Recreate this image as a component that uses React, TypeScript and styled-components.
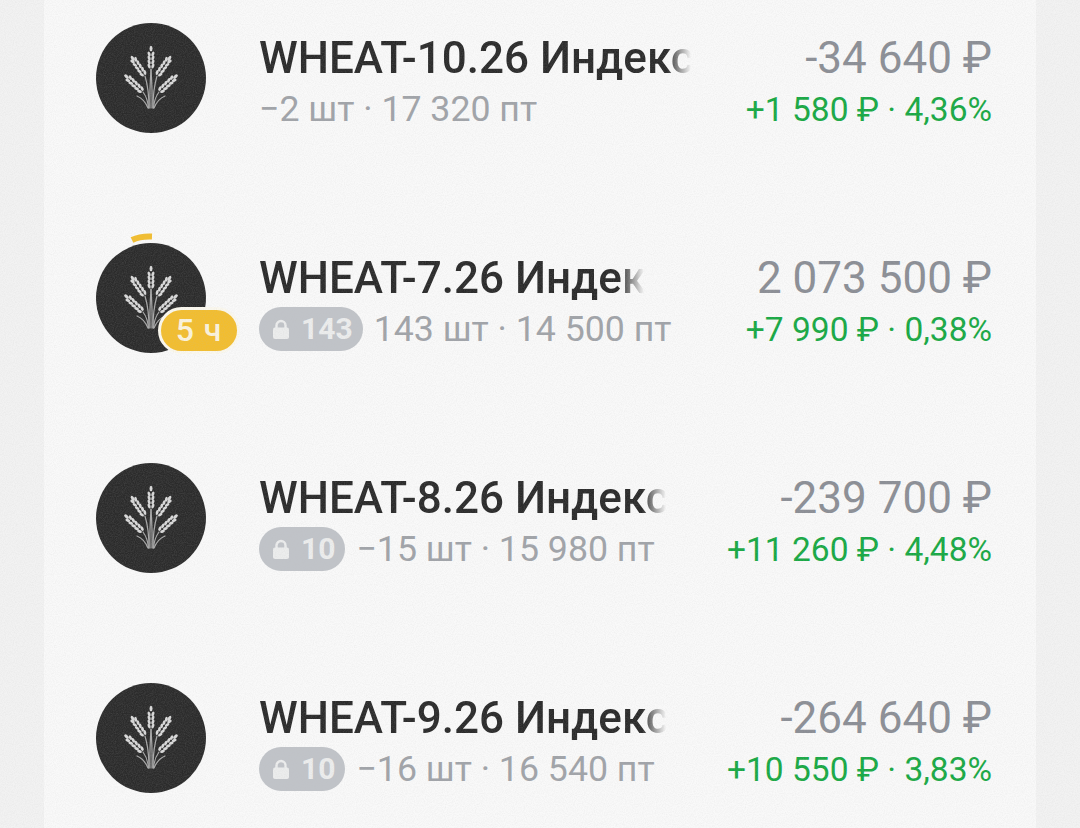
import React from 'react';
import styled, { createGlobalStyle } from 'styled-components';

const GlobalStyle = createGlobalStyle`
  html, body {
    margin: 0;
    padding: 0;
    background: #efefef;
    font-family: Roboto, "Noto Sans", sans-serif;
  }
`;

const grain =
  "data:image/svg+xml,%3Csvg xmlns='http://www.w3.org/2000/svg' width='300' height='300'%3E%3Cfilter id='n'%3E%3CfeTurbulence type='fractalNoise' baseFrequency='0.9' numOctaves='2' stitchTiles='stitch'/%3E%3CfeColorMatrix values='0 0 0 0 0.5 0 0 0 0 0.5 0 0 0 0 0.5 0.9 0 0 0 -0.3'/%3E%3C/filter%3E%3Crect width='300' height='300' filter='url(%23n)'/%3E%3C/svg%3E";

const Page = styled.div`
  position: relative;
  width: 1080px;
  height: 828px;
  overflow: hidden;
  padding: 0 44px;
  box-sizing: border-box;
  background: #f2f2f2;

  &::after {
    content: '';
    position: absolute;
    inset: 0;
    pointer-events: none;
    background-image: url("${grain}");
    opacity: 0.3;
  }
`;

const Card = styled.div`
  background: #f9f9f9;
  height: 100%;
  overflow: hidden;
`;

const List = styled.div`
  margin-top: -32px;
`;

const Row = styled.div`
  height: 220px;
  display: flex;
  align-items: center;
  padding: 0 44px 0 52px;
  box-sizing: border-box;
`;

const Avatar = styled.div`
  position: relative;
  flex: none;
  width: 110px;
  height: 110px;
  margin-right: 53px;
  border-radius: 50%;
  background: #2b2b2b;
  display: flex;
  align-items: center;
  justify-content: center;
`;

const TimerArc = styled.svg`
  position: absolute;
  left: 30px;
  top: -12px;
  width: 32px;
  height: 14px;
`;

const TimeBadge = styled.div`
  position: absolute;
  left: 62px;
  top: 64px;
  width: 82px;
  height: 47px;
  box-sizing: border-box;
  border: 3px solid #fbf8ee;
  border-radius: 24px;
  background: #f2bd2e;
  color: #fbf3dc;
  font-size: 32px;
  font-weight: 500;
  letter-spacing: 1px;
  line-height: 41px;
  text-align: center;
`;

const Info = styled.div`
  flex: 1;
  min-width: 0;
  padding-top: 9px;
  display: flex;
  flex-direction: column;
  gap: 5px;
`;

const Title = styled.div<{ $width: number }>`
  width: ${(p) => p.$width}px;
  overflow: hidden;
  white-space: nowrap;
  font-size: 44px;
  font-weight: 500;
  line-height: 48px;
  color: #2a2a2a;
  -webkit-mask-image: linear-gradient(to right, #000 calc(100% - 24px), transparent);
  mask-image: linear-gradient(to right, #000 calc(100% - 24px), transparent);
`;

const Meta = styled.div`
  display: flex;
  align-items: center;
  gap: 11px;
  font-size: 35.7px;
  line-height: 44px;
  color: #a0a3a8;
  white-space: nowrap;
`;

const LockPill = styled.span`
  display: inline-flex;
  align-items: center;
  gap: 11px;
  height: 44px;
  padding: 0 10px 0 13px;
  border-radius: 22px;
  background: #c0c3c8;
  color: #eceded;
  font-size: 30px;
  font-weight: 700;
`;

const Values = styled.div`
  flex: none;
  padding-top: 9px;
  display: flex;
  flex-direction: column;
  align-items: flex-end;
  gap: 6px;
`;

const Amount = styled.div`
  font-size: 44px;
  line-height: 48px;
  color: #8b8e95;
  white-space: nowrap;
`;

const Profit = styled.div`
  font-size: 33.5px;
  line-height: 44px;
  color: #17a843;
  white-space: nowrap;
`;

// a single ear of wheat, growing up from its base
const Ear: React.FC<{ x: number; y: number; angle: number; len: number }> = ({ x, y, angle, len }) => {
  const grains = [];
  const count = Math.floor(len / 4) - 1;
  for (let i = 0; i < count; i++) {
    const gy = -i * 4 - 3;
    grains.push(<ellipse key={`l${i}`} cx={-1.9} cy={gy} rx={1.4} ry={2.5} transform={`rotate(-22 -1.9 ${gy})`} />);
    grains.push(<ellipse key={`r${i}`} cx={1.9} cy={gy} rx={1.4} ry={2.5} transform={`rotate(22 1.9 ${gy})`} />);
  }
  return (
    <g transform={`translate(${x} ${y}) rotate(${angle})`} fill="#d8d8d8">
      {grains}
      <ellipse cx={0} cy={-len + 2.5} rx={1.5} ry={2.8} />
    </g>
  );
};

const WheatIcon: React.FC = () => (
  <svg width="54" height="66" viewBox="0 0 54 66">
    <g fill="none" stroke="#a8a8a8" strokeWidth="1.2" strokeLinecap="round">
      <path d="M26 63 C25.5 48 26.2 36 27 24" />
      <path d="M28 63 C28.5 48 27.8 36 27 24" />
      <path d="M25 63 C25 50 24 41 21 31" />
      <path d="M29 63 C29 50 30 41 33 31" />
      <path d="M24.5 63 C24 56 22 51 19 47" />
      <path d="M29.5 63 C30 56 32 51 35 47" />
      <path d="M24 63 C21.5 57 18 53 13 51" />
      <path d="M30 63 C32.5 57 36 53 41 51" />
    </g>
    <Ear x={27} y={24} angle={0} len={23} />
    <Ear x={21} y={31} angle={-35} len={24} />
    <Ear x={33} y={31} angle={35} len={24} />
    <Ear x={19} y={47} angle={-47} len={25} />
    <Ear x={35} y={47} angle={47} len={25} />
  </svg>
);

const LockIcon: React.FC = () => (
  <svg width="18" height="21" viewBox="0 0 18 21" fill="none">
    <path d="M4.5 9V6.5a4.5 4.5 0 0 1 9 0V9" stroke="currentColor" strokeWidth="2.4" />
    <rect x="1" y="8.5" width="16" height="11.5" rx="2" fill="currentColor" />
  </svg>
);

interface Position {
  title: string;
  titleWidth: number;
  meta: string;
  locked?: string;
  amount: string;
  profit: string;
  expires?: string;
}

const positions: Position[] = [
  { title: 'WHEAT-10.26 Индекс', titleWidth: 432, meta: '−2 шт · 17 320 пт', amount: '-34 640 ₽', profit: '+1 580 ₽ · 4,36%' },
  { title: 'WHEAT-7.26 Индекс', titleWidth: 385, meta: '143 шт · 14 500 пт', locked: '143', amount: '2 073 500 ₽', profit: '+7 990 ₽ · 0,38%', expires: '5 ч' },
  { title: 'WHEAT-8.26 Индекс', titleWidth: 407, meta: '−15 шт · 15 980 пт', locked: '10', amount: '-239 700 ₽', profit: '+11 260 ₽ · 4,48%' },
  { title: 'WHEAT-9.26 Индекс', titleWidth: 407, meta: '−16 шт · 16 540 пт', locked: '10', amount: '-264 640 ₽', profit: '+10 550 ₽ · 3,83%' },
];

const App: React.FC = () => {
  return (
    <>
      <GlobalStyle />
      <Page>
        <Card>
          <List>
            {positions.map((pos) => (
              <Row key={pos.title}>
                <Avatar>
                  <WheatIcon />
                  {pos.expires && (
                    <>
                      <TimerArc viewBox="0 0 32 14">
                        <path d="M6 9 Q14 5 26 5.5" fill="none" stroke="#f2bd2e" strokeWidth="6" />
                      </TimerArc>
                      <TimeBadge>{pos.expires}</TimeBadge>
                    </>
                  )}
                </Avatar>
                <Info>
                  <Title $width={pos.titleWidth}>{pos.title}</Title>
                  <Meta>
                    {pos.locked && (
                      <LockPill>
                        <LockIcon />
                        {pos.locked}
                      </LockPill>
                    )}
                    {pos.meta}
                  </Meta>
                </Info>
                <Values>
                  <Amount>{pos.amount}</Amount>
                  <Profit>{pos.profit}</Profit>
                </Values>
              </Row>
            ))}
          </List>
        </Card>
      </Page>
    </>
  );
};

export default App;
